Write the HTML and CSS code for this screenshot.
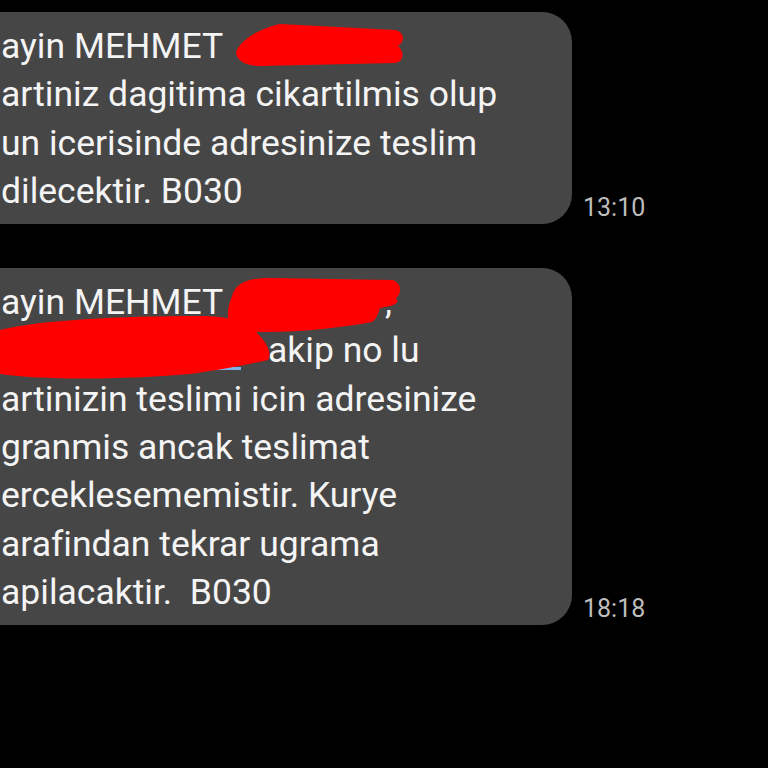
FILE: index.html
```html
<!DOCTYPE html>
<html lang="tr">
<head>
    <meta charset="UTF-8">
    <meta name="viewport" content="width=device-width, initial-scale=1">
    <title>Mesajlar</title>
    <link rel="stylesheet" href="styles.css">
</head>
<body>
    <div class="thread">
        <div class="message-row">
            <div class="bubble">
                <p class="text">ayin MEHMET<br>artiniz dagitima cikartilmis olup<br>un icerisinde adresinize teslim<br>dilecektir. B030</p>
                <svg class="redact" width="572" height="212" viewBox="0 0 572 212">
                    <path d="M236 40 C240 28 260 16 280 12 L395 18 C405 20 405 30 398 34 C405 40 404 50 395 51 L260 54 C245 54 236 48 236 40 Z" fill="#ff0000"/>
                </svg>
            </div>
            <span class="time">13:10</span>
        </div>
        <div class="message-row">
            <div class="bubble">
                <p class="text">ayin MEHMET<span class="hidden-name"></span>,<br><span class="hidden-code"></span>akip no lu<br>artinizin teslimi icin adresinize<br>granmis ancak teslimat<br>erceklesememistir. Kurye<br>arafindan tekrar ugrama<br>apilacaktir.&nbsp; B030</p>
                <svg class="redact" width="572" height="357" viewBox="0 0 572 357">
                    <rect x="205" y="99" width="36" height="3" fill="#7fb0e8"/>
                    <path d="M232 28 C236 14 250 10 270 10 L392 12 C402 14 402 26 396 30 C400 34 396 38 380 40 C378 46 376 52 372 54 C340 60 300 64 268 64 C250 64 236 62 230 56 C226 48 228 38 232 28 Z" fill="#ff0000"/>
                    <path d="M0 62 C40 52 120 48 200 48 C230 48 250 54 258 66 C268 76 272 86 268 92 C250 96 220 102 190 106 C120 112 40 112 0 106 Z" fill="#ff0000"/>
                </svg>
            </div>
            <span class="time">18:18</span>
        </div>
    </div>
</body>
</html>
```

FILE: styles.css
```css
body {
    margin: 0;
    background-color: #000;
    font-family: Roboto, "Noto Sans", sans-serif;
    height: 768px;
    overflow: hidden;
}
.thread {
    display: flex;
    flex-direction: column;
    gap: 44px;
    padding-top: 12px;
}
.message-row {
    display: flex;
    align-items: flex-end;
}
.bubble {
    position: relative;
    width: 572px;
    background-color: #464646;
    border-radius: 0 30px 30px 0;
    padding: 10px 0 9px 1px;
    box-sizing: border-box;
}
.text {
    margin: 0;
    color: #f4f4f4;
    font-size: 35.5px;
    line-height: 48.3px;
    white-space: nowrap;
}
.hidden-name {
    display: inline-block;
    width: 162px;
}
.hidden-code {
    display: inline-block;
    width: 267px;
}
.redact {
    position: absolute;
    left: 0;
    top: 0;
}
.time {
    margin-left: 11px;
    margin-bottom: 4px;
    color: #bdbdbd;
    font-size: 25px;
    line-height: 1;
}
```
